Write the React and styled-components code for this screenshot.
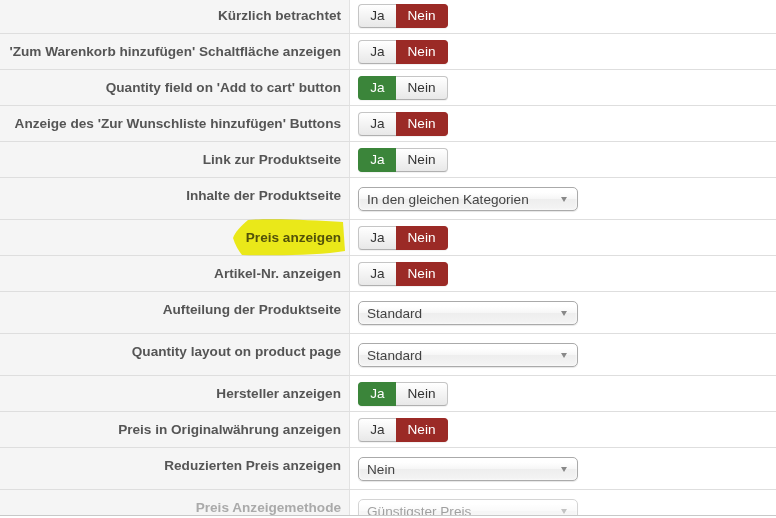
import React from "react";
import styled, { createGlobalStyle } from "styled-components";

const GlobalStyle = createGlobalStyle`
  html, body {
    margin: 0;
    padding: 0;
    background: #fff;
  }
  body {
    font-family: "Liberation Sans", Arial, sans-serif;
    font-size: 13.5px;
    color: #333;
  }
`;

const rows = [
  { label: "Kürzlich betrachtet", type: "toggle", value: false },
  { label: "'Zum Warenkorb hinzufügen' Schaltfläche anzeigen", type: "toggle", value: false },
  { label: "Quantity field on 'Add to cart' button", type: "toggle", value: true },
  { label: "Anzeige des 'Zur Wunschliste hinzufügen' Buttons", type: "toggle", value: false },
  { label: "Link zur Produktseite", type: "toggle", value: true },
  { label: "Inhalte der Produktseite", type: "select", value: "In den gleichen Kategorien" },
  { label: "Preis anzeigen", type: "toggle", value: false, marked: true },
  { label: "Artikel-Nr. anzeigen", type: "toggle", value: false },
  { label: "Aufteilung der Produktseite", type: "select", value: "Standard" },
  { label: "Quantity layout on product page", type: "select", value: "Standard" },
  { label: "Hersteller anzeigen", type: "toggle", value: true },
  { label: "Preis in Originalwährung anzeigen", type: "toggle", value: false },
  { label: "Reduzierten Preis anzeigen", type: "select", value: "Nein" },
  { label: "Preis Anzeigemethode", type: "select", value: "Günstigster Preis", disabled: true },
];

const Viewport = styled.div`
  height: 515px;
  overflow: hidden;
  border-bottom: 1px solid #c8c8c8;
`;

const Table = styled.div`
  margin-top: -3px;
`;

const Row = styled.div`
  display: grid;
  grid-template-columns: 350px 1fr;
  border-top: 1px solid #dedede;
`;

const Label = styled.div`
  position: relative;
  background: #f5f5f5;
  border-right: 1px solid #e2e2e2;
  padding: 9px 8px 0 0;
  text-align: right;
  line-height: 18px;
  font-size: 13.6px;
  font-weight: bold;
  color: ${(p) => (p.$disabled ? "#aaa" : "#555")};
  white-space: nowrap;
`;

const LabelText = styled.span`
  position: relative;
  z-index: 1;
`;

const Marker = styled.svg`
  position: absolute;
  left: 232px;
  top: -2px;
  width: 114px;
  height: 40px;
  z-index: 2;
  mix-blend-mode: multiply;
  pointer-events: none;
`;

const Control = styled.div`
  padding: 6px 8px 5px;
  display: flex;
  align-items: flex-start;
`;

const BtnGroup = styled.div`
  display: inline-flex;
  height: 24px;
  border-radius: 4px;
  box-shadow: 0 1px 1px rgba(0, 0, 0, 0.06);
`;

const Btn = styled.div`
  display: flex;
  align-items: center;
  justify-content: center;
  width: ${(p) => p.$w}px;
  box-sizing: border-box;
  font-size: 13.6px;
  line-height: 18px;
  border: 1px solid ${(p) => (p.$active ? p.$bg : "#c5c5c5")};
  border-bottom-color: ${(p) => (p.$active ? p.$bg : "#b0b0b0")};
  color: ${(p) => (p.$active ? "#fff" : "#333")};
  background: ${(p) =>
    p.$active ? p.$bg : "linear-gradient(#ffffff, #e8e8e8)"};
  &:first-child {
    border-radius: 4px 0 0 4px;
    border-right: none;
  }
  &:last-child {
    border-radius: 0 4px 4px 0;
    border-left: none;
  }
`;

const Select = styled.div`
  margin: 3px 0;
  width: 220px;
  height: 24px;
  box-sizing: border-box;
  border: 1px solid #aaa;
  border-radius: 5px;
  padding: 0 8px;
  display: flex;
  align-items: center;
  justify-content: space-between;
  color: #444;
  font-size: 13.6px;
  background: linear-gradient(#ffffff 20%, #f6f6f6 50%, #eeeeee 52%, #f4f4f4 100%);
  box-shadow: inset 0 0 3px #fff, 0 1px 1px rgba(0, 0, 0, 0.1);
  opacity: ${(p) => (p.$disabled ? 0.5 : 1)};
`;

const Arrow = styled.span`
  width: 0;
  height: 0;
  margin-right: 2px;
  border-left: 3.5px solid transparent;
  border-right: 3.5px solid transparent;
  border-top: 5px solid #888;
`;

const Toggle = ({ value }) => (
  <BtnGroup>
    <Btn $w={38} $active={value} $bg="#3b853a">
      Ja
    </Btn>
    <Btn $w={52} $active={!value} $bg="#9b2a26">
      Nein
    </Btn>
  </BtnGroup>
);

const Highlight = () => (
  <Marker viewBox="0 0 114 40">
    <path
      d="M16 2 C40 0 80 2 111 4 L113 33 C90 37 50 38 10 37 C7 33 3 27 1 20 C3 14 9 8 16 2 Z"
      fill="#f4f21a"
    />
  </Marker>
);

export default function App() {
  return (
    <>
      <GlobalStyle />
      <Viewport>
        <Table>
          {rows.map((r) => (
            <Row key={r.label}>
              <Label $disabled={r.disabled}>
                {r.marked && <Highlight />}
                <LabelText>{r.label}</LabelText>
              </Label>
              <Control>
                {r.type === "toggle" ? (
                  <Toggle value={r.value} />
                ) : (
                  <Select $disabled={r.disabled}>
                    <span>{r.value}</span>
                    <Arrow />
                  </Select>
                )}
              </Control>
            </Row>
          ))}
        </Table>
      </Viewport>
    </>
  );
}
